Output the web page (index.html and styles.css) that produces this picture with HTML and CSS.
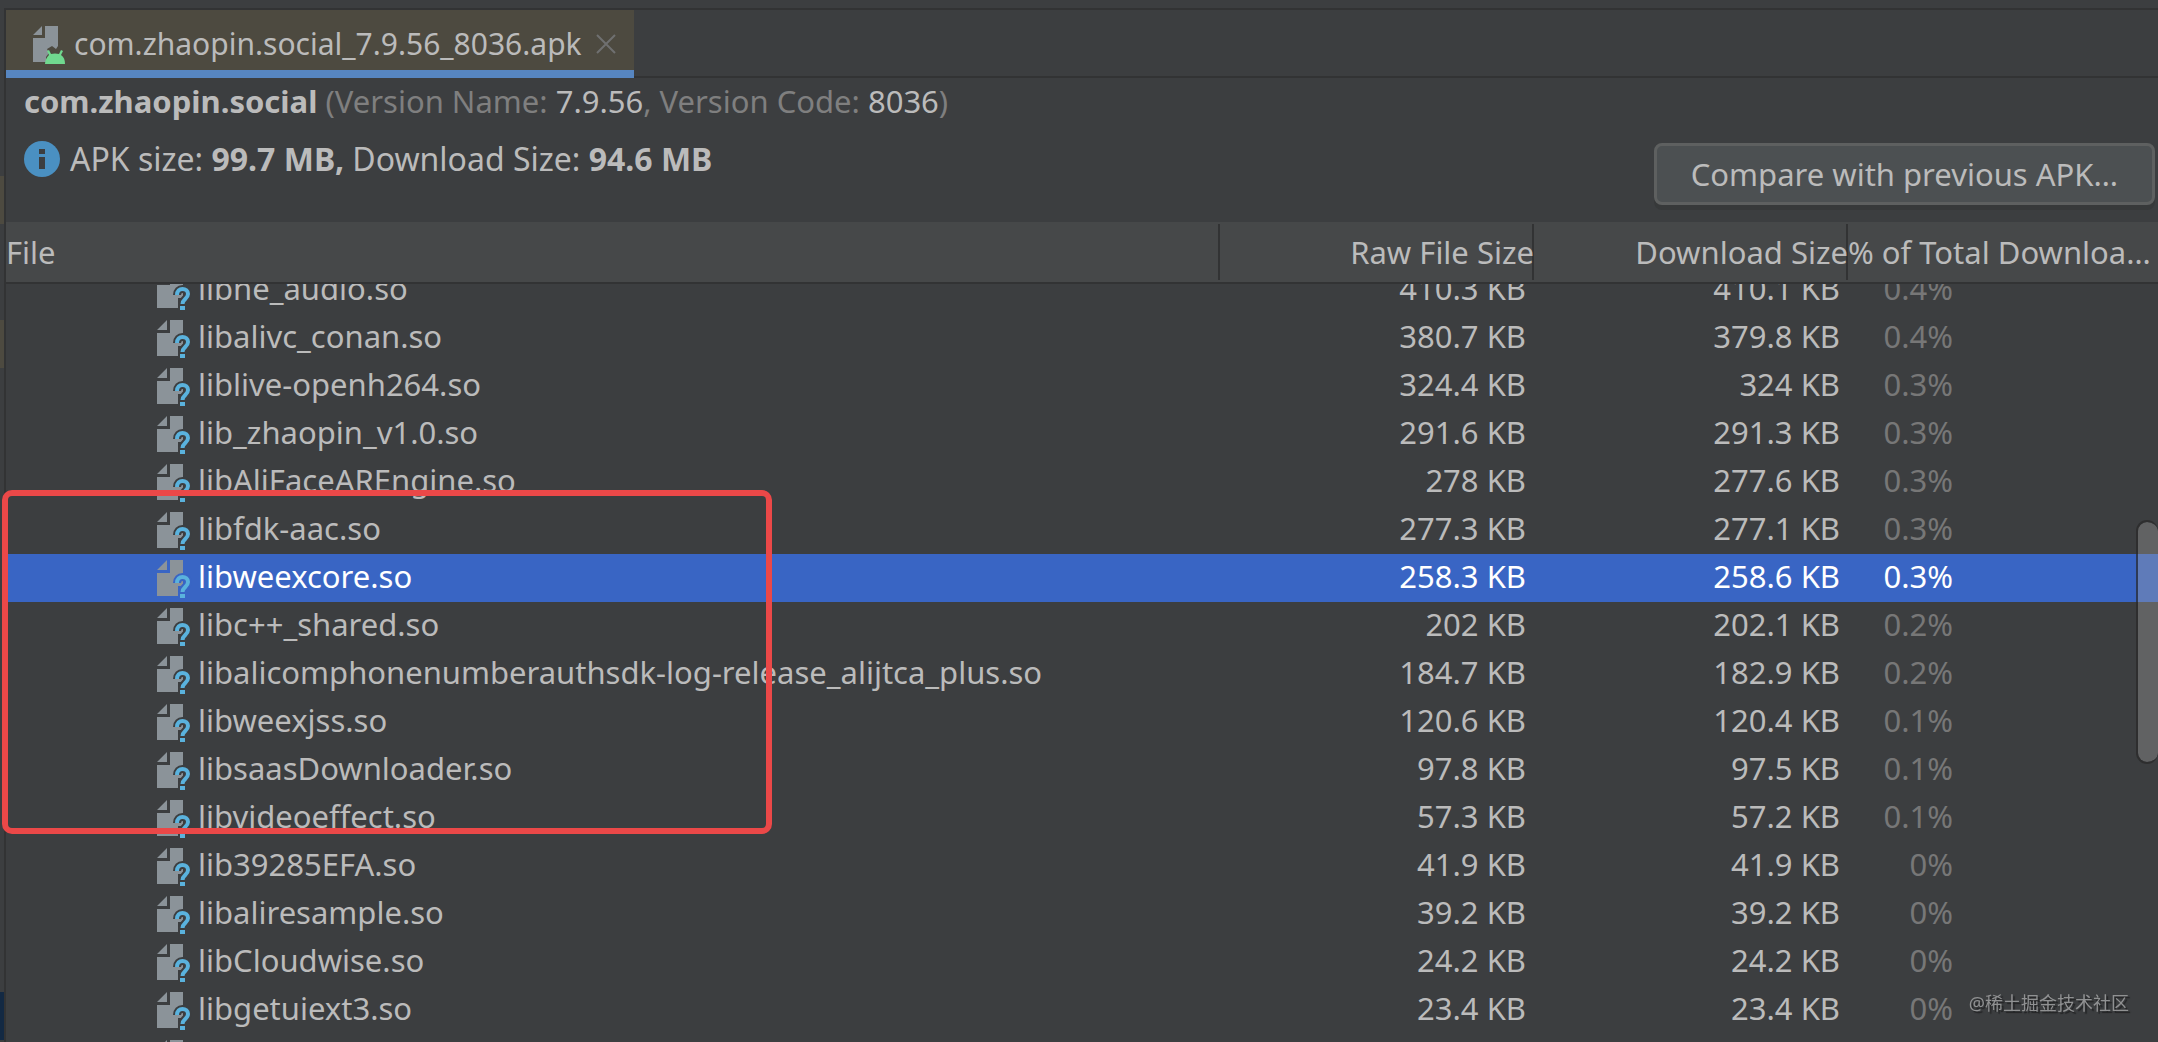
FILE: index.html
```html
<!DOCTYPE html>
<html lang="en">
<head>
<meta charset="utf-8">
<title>com.zhaopin.social_7.9.56_8036.apk</title>
<link rel="stylesheet" href="styles.css">
</head>
<body>
<svg class="sprite" aria-hidden="true">
  <symbol id="unknown-file" viewBox="0 0 36 40">
    <path class="page" d="M1 12 11 2v10zM14 2h13v36H1V15h13z"/>
    <path class="knock" d="M22 28h10v12H22z"/>
    <path class="knock-line" d="M21 25c0-4 2.500-6 5.500-6s5.500 2 5.500 5c0 5-5.500 5-5.500 10"/>
    <path class="mark" d="M21 25c0-4 2.500-6 5.500-6s5.500 2 5.500 5c0 5-5.500 5-5.500 10"/>
    <path class="dot" d="M24 36h5v4h-5z"/>
  </symbol>
</svg>
<div class="window">
  <aside class="gutter">
    <span class="mark-a"></span><span class="mark-b"></span><span class="mark-c"></span>
  </aside>
  <main class="editor">
    <nav class="tabs">
      <div class="tab">
        <svg class="tab-icon" viewBox="0 0 34 40" aria-hidden="true">
          <path class="page" d="M1 11 10 2v9zM13 2h13v20l-2 3-4-3-5 3 2 4-3 4v5H1V14h12z"/>
          <path class="droid" d="M13 40c0-4 2-7 4-9l-2-4 2-1 2 4q4-1 8 0l2-4 2 1-2 4c3 2 4 5 4 9z"/>
        </svg>
        <a class="tab-name" href="#apk">com.zhaopin.social_7.9.56_8036.apk</a>
        <button class="close" type="button" aria-label="Close tab">
          <svg viewBox="0 0 20 20" aria-hidden="true"><path d="M1 1 19 19M19 1 1 19"/></svg>
        </button>
      </div>
    </nav>
    <header class="summary" id="apk">
      <div class="facts">
        <h1><b>com.zhaopin.social</b> (Version Name: <span>7.9.56</span>, Version Code: <span>8036</span>)</h1>
        <p>
          <svg class="info" viewBox="0 0 36 36" aria-hidden="true"><circle cx="18" cy="18" r="18"/><path d="M15 8h6v5h-6zM15 16h6v12h-6z"/></svg>
          <span>APK size: <b>99.7 MB, </b>Download Size: <b>94.6 MB</b></span>
        </p>
      </div>
      <button class="compare" type="button">Compare with previous APK…</button>
    </header>
    <section class="tree">
      <div class="viewport">
        <table>
          <colgroup><col><col class="size"><col class="size"><col class="share"></colgroup>
          <thead><tr><th>File</th><th>Raw File Size</th><th>Download Size</th><th>% of Total Downloa…</th></tr></thead>
          <tbody>
            <tr><td><svg class="icon"><use href="#unknown-file"/></svg>libne_audio.so</td><td>410.3 KB</td><td>410.1 KB</td><td>0.4%</td></tr>
            <tr><td><svg class="icon"><use href="#unknown-file"/></svg>libalivc_conan.so</td><td>380.7 KB</td><td>379.8 KB</td><td>0.4%</td></tr>
            <tr><td><svg class="icon"><use href="#unknown-file"/></svg>liblive-openh264.so</td><td>324.4 KB</td><td>324 KB</td><td>0.3%</td></tr>
            <tr><td><svg class="icon"><use href="#unknown-file"/></svg>lib_zhaopin_v1.0.so</td><td>291.6 KB</td><td>291.3 KB</td><td>0.3%</td></tr>
            <tr><td><svg class="icon"><use href="#unknown-file"/></svg>libAliFaceAREngine.so</td><td>278 KB</td><td>277.6 KB</td><td>0.3%</td></tr>
            <tr><td><svg class="icon"><use href="#unknown-file"/></svg>libfdk-aac.so</td><td>277.3 KB</td><td>277.1 KB</td><td>0.3%</td></tr>
            <tr class="selected"><td><svg class="icon"><use href="#unknown-file"/></svg>libweexcore.so</td><td>258.3 KB</td><td>258.6 KB</td><td>0.3%</td></tr>
            <tr><td><svg class="icon"><use href="#unknown-file"/></svg>libc++_shared.so</td><td>202 KB</td><td>202.1 KB</td><td>0.2%</td></tr>
            <tr><td><svg class="icon"><use href="#unknown-file"/></svg>libalicomphonenumberauthsdk-log-release_alijtca_plus.so</td><td>184.7 KB</td><td>182.9 KB</td><td>0.2%</td></tr>
            <tr><td><svg class="icon"><use href="#unknown-file"/></svg>libweexjss.so</td><td>120.6 KB</td><td>120.4 KB</td><td>0.1%</td></tr>
            <tr><td><svg class="icon"><use href="#unknown-file"/></svg>libsaasDownloader.so</td><td>97.8 KB</td><td>97.5 KB</td><td>0.1%</td></tr>
            <tr><td><svg class="icon"><use href="#unknown-file"/></svg>libvideoeffect.so</td><td>57.3 KB</td><td>57.2 KB</td><td>0.1%</td></tr>
            <tr><td><svg class="icon"><use href="#unknown-file"/></svg>lib39285EFA.so</td><td>41.9 KB</td><td>41.9 KB</td><td>0%</td></tr>
            <tr><td><svg class="icon"><use href="#unknown-file"/></svg>libaliresample.so</td><td>39.2 KB</td><td>39.2 KB</td><td>0%</td></tr>
            <tr><td><svg class="icon"><use href="#unknown-file"/></svg>libCloudwise.so</td><td>24.2 KB</td><td>24.2 KB</td><td>0%</td></tr>
            <tr><td><svg class="icon"><use href="#unknown-file"/></svg>libgetuiext3.so</td><td>23.4 KB</td><td>23.4 KB</td><td>0%</td></tr>
            <tr><td><svg class="icon"><use href="#unknown-file"/></svg></td><td></td><td></td><td></td></tr>
          </tbody>
        </table>
      </div>
      <div class="thumb"></div>
      <div class="highlight"></div>
      <div class="watermark">@稀土掘金技术社区</div>
    </section>
  </main>
</div>
<script src="tree.js"></script>
</body>
</html>
```

FILE: tree.js
```js
document.querySelector('.viewport').scrollTop = 18;
```

FILE: styles.css
```css
* { box-sizing: border-box; }

body {
  margin: 0;
  background: #3c3e40;
  color: #bbbbbb;
  font: 31px/46px "Noto Sans", "Noto Sans CJK SC", sans-serif;
}

button { font: inherit; color: inherit; padding: 0; }
.sprite { display: none; }

.window { display: flex; height: 100vh; border-top: 8px solid #3c3e40; overflow: hidden; }

.gutter {
  display: flex;
  flex-direction: column;
  width: 6px;
  padding-top: 168px;
  border-right: 2px solid #323334;
}
.gutter span { height: 48px; flex: none; }
.mark-a { background: #4d4a40; }
.mark-b { background: #4d4a40; margin-top: 96px; }
.mark-c { background: #132943; margin-top: 624px; }

.editor { flex: 1; min-width: 0; display: flex; flex-direction: column; }

.tabs { display: flex; height: 70px; border-top: 2px solid #323334; border-bottom: 2px solid #323334; }
.tab {
  display: flex;
  align-items: center;
  height: 68px;
  padding: 8px 18px 0 26px;
  background: #4d4a40;
  border-bottom: 8px solid #5786c1;
  font-size: 30px;
}
.tab-icon { width: 34px; height: 40px; margin-right: 8px; }
.tab-name { color: inherit; text-decoration: none; }
.page { fill: #8b9399; }
.droid { fill: #70d88f; }
.close { display: flex; margin-left: 14px; border: 0; background: none; }
.close svg { width: 20px; height: 20px; fill: none; stroke: #6f7070; stroke-width: 2; }

.summary { display: flex; justify-content: space-between; height: 144px; padding: 0 3px 0 18px; }
.facts { display: flex; flex-direction: column; gap: 12px; }
h1 { margin: 0; font: inherit; color: #7f7f7f; }
h1 b, h1 span { color: #bbbbbb; }
p { display: flex; align-items: center; margin: 0; font-size: 32px; }
.info { width: 36px; height: 36px; margin-right: 10px; fill: #4a90c2; }
.info path { fill: #3c3e40; }
.compare {
  height: 62px;
  margin-top: 65px;
  padding: 0 34px;
  line-height: 56px;
  background: #4c5052;
  border: 3px solid #5e6060;
  border-radius: 8px;
  box-shadow: 0 5px 0 #37393a;
}

.tree { position: relative; flex: 1; min-height: 0; }
.viewport { height: 100%; overflow-y: scroll; scrollbar-width: none; }

table { width: 100%; table-layout: fixed; border-collapse: separate; border-spacing: 0; }
.size { width: 314px; }
.share { width: 310px; }
th, td { padding: 0; text-align: right; white-space: nowrap; }

th {
  position: sticky;
  top: 0;
  z-index: 1;
  height: 62px;
  background: #464849 linear-gradient(#323334, #323334) right 2px / 2px 56px no-repeat;
  border-bottom: 2px solid #323334;
  font-weight: normal;
}
th:first-child, th:last-child { text-align: left; }
th:last-child { background: #464849; }

td { height: 48px; padding: 0 8px 4px 0; line-height: 44px; }
td:first-child { padding-left: 150px; text-align: left; }
td:last-child { padding-right: 205px; color: #777777; }
.icon { width: 36px; height: 40px; margin-right: 6px; vertical-align: -10px; }

tr { --row: #3c3e40; }
.selected { --row: #3965c4; background: #3965c4; }
.selected td { color: #ffffff; }
.knock { fill: var(--row); }
.knock-line { fill: none; stroke: var(--row); stroke-width: 8; }
.mark { fill: none; stroke: #5ab2dd; stroke-width: 4; }
.dot { fill: #5ab2dd; }

/* Overlays above the tree */
.thumb {
  position: absolute;
  z-index: 2;
  top: 298px;
  right: 0;
  width: 22px;
  height: 244px;
  background: rgba(166, 166, 166, 0.35);
  background-clip: padding-box;
  border: 2px solid rgba(40, 40, 40, 0.7);
  border-right-width: 0;
  border-radius: 11px;
}
.highlight {
  position: absolute;
  z-index: 2;
  top: 268px;
  left: -4px;
  width: 770px;
  height: 344px;
  border: 6px solid #eb4848;
  border-radius: 10px;
}
.watermark {
  position: absolute;
  z-index: 2;
  right: 29px;
  bottom: 26px;
  color: #909192;
  font-size: 18px;
  line-height: 26px;
  text-shadow: 2px 2px 1px #222324;
}
```
